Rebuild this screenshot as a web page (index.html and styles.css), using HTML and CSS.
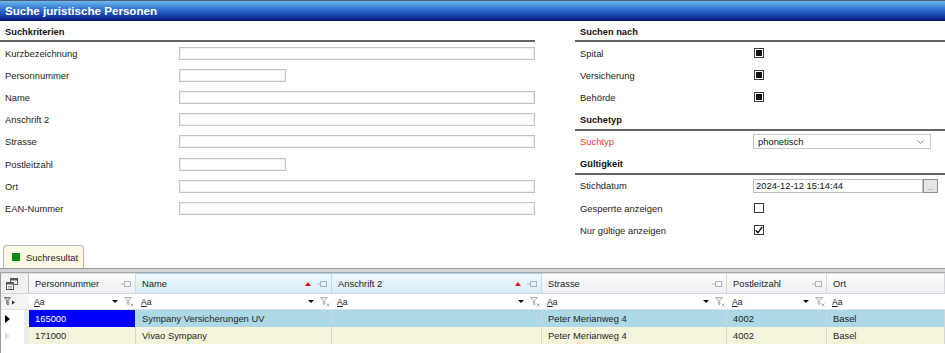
FILE: index.html
```html
<!DOCTYPE html>
<html lang="de">
<head>
<meta charset="utf-8">
<title>Suche juristische Personen</title>
<link rel="stylesheet" href="styles.css">
</head>
<body>
<div class="titlebar">Suche juristische Personen</div>

<div class="form">
  <section class="panel left">
    <div class="sec-head">Suchkriterien</div>
    <div class="row"><span class="lbl">Kurzbezeichnung</span><span class="input wide"></span></div>
    <div class="row"><span class="lbl">Personnummer</span><span class="input short"></span></div>
    <div class="row"><span class="lbl">Name</span><span class="input wide"></span></div>
    <div class="row"><span class="lbl">Anschrift 2</span><span class="input wide"></span></div>
    <div class="row"><span class="lbl">Strasse</span><span class="input wide"></span></div>
    <div class="row"><span class="lbl">Postleitzahl</span><span class="input short"></span></div>
    <div class="row"><span class="lbl">Ort</span><span class="input wide"></span></div>
    <div class="row"><span class="lbl">EAN-Nummer</span><span class="input wide"></span></div>
  </section>

  <section class="panel right">
    <div class="sec-head">Suchen nach</div>
    <div class="row"><span class="lbl">Spital</span><span class="cb on"></span></div>
    <div class="row"><span class="lbl">Versicherung</span><span class="cb on"></span></div>
    <div class="row"><span class="lbl">Behörde</span><span class="cb on"></span></div>
    <div class="sec-head sub">Suchetyp</div>
    <div class="row"><span class="lbl req">Suchtyp</span>
      <span class="select"><span class="sel-text">phonetisch</span>
        <svg class="chev" width="7" height="4" viewBox="0 0 7 4"><path d="M0.5 0.5L3.5 3.5L6.5 0.5" fill="none" stroke="#8a8a8a"/></svg>
      </span>
    </div>
    <div class="sec-head sub">Gültigkeit</div>
    <div class="row"><span class="lbl">Stichdatum</span>
      <span class="date"><span class="dinput">2024-12-12 15:14:44</span><span class="dbtn">...</span></span>
    </div>
    <div class="row"><span class="lbl">Gesperrte anzeigen</span><span class="cb"></span></div>
    <div class="row"><span class="lbl">Nur gültige anzeigen</span>
      <span class="cb"><svg width="8" height="8" viewBox="0 0 8 8"><path d="M0.8 4.2L3 6.6L7.3 0.8" fill="none" stroke="#111" stroke-width="1.4"/></svg></span>
    </div>
  </section>
</div>

<div class="tabs">
  <div class="tab"><span class="tab-icon"></span>Suchresultat</div>
</div>
<div class="band"></div>

<div class="grid">
  <div class="grow ghead">
    <div class="hc sel">
      <svg width="12" height="12" viewBox="0 0 12 12"><rect x="4.5" y="0.5" width="7" height="6" fill="#fff" stroke="#555"/><rect x="4.5" y="0.5" width="7" height="2" fill="#555"/><rect x="0.5" y="4.5" width="7" height="7" fill="#fff" stroke="#555"/><rect x="0.5" y="4.5" width="7" height="2" fill="#555"/><path d="M2 8.5h4M2 10h4" stroke="#999"/></svg>
    </div>
    <div class="hc"><span class="ht">Personnummer</span><svg class="pin" width="10" height="6" viewBox="0 0 10 6"><path d="M0 3h3" stroke="#a9b4bd"/><rect x="3.5" y="0.5" width="6" height="5" fill="none" stroke="#a9b4bd"/></svg></div>
    <div class="hc sorted"><span class="ht">Name</span><svg class="sort" width="6" height="4" viewBox="0 0 6 4"><path d="M0 4L3 0L6 4z" fill="#e01010"/></svg><svg class="pin" width="10" height="6" viewBox="0 0 10 6"><path d="M0 3h3" stroke="#a9b4bd"/><rect x="3.5" y="0.5" width="6" height="5" fill="none" stroke="#a9b4bd"/></svg></div>
    <div class="hc sorted"><span class="ht">Anschrift 2</span><svg class="sort" width="6" height="4" viewBox="0 0 6 4"><path d="M0 4L3 0L6 4z" fill="#e01010"/></svg><svg class="pin" width="10" height="6" viewBox="0 0 10 6"><path d="M0 3h3" stroke="#a9b4bd"/><rect x="3.5" y="0.5" width="6" height="5" fill="none" stroke="#a9b4bd"/></svg></div>
    <div class="hc"><span class="ht">Strasse</span><svg class="pin" width="10" height="6" viewBox="0 0 10 6"><path d="M0 3h3" stroke="#a9b4bd"/><rect x="3.5" y="0.5" width="6" height="5" fill="none" stroke="#a9b4bd"/></svg></div>
    <div class="hc"><span class="ht">Postleitzahl</span><svg class="pin" width="10" height="6" viewBox="0 0 10 6"><path d="M0 3h3" stroke="#a9b4bd"/><rect x="3.5" y="0.5" width="6" height="5" fill="none" stroke="#a9b4bd"/></svg></div>
    <div class="hc"><span class="ht">Ort</span></div>
  </div>

  <div class="grow gfilter">
    <div class="fc sel">
      <svg width="11" height="9" viewBox="0 0 11 9"><path d="M0.5 0.5h6l-2.3 3v4.5l-1.4-1v-3.5z" fill="#c4c4c4" stroke="#6f6f6f"/><path d="M8 3.5l3 2-3 2z" fill="#222"/></svg>
    </div>
    <div class="fc"><span class="aa"><u>A</u>a</span><svg class="dd" width="6" height="3" viewBox="0 0 6 3"><path d="M0 0h6L3 3z" fill="#111"/></svg><svg class="fx" width="10" height="10" viewBox="0 0 10 10"><path d="M0.5 0.5h7l-2.8 3.2v4.3l-1.4-1v-3.3z" fill="#eee" stroke="#b3b3b3"/><path d="M6.5 6.5l3 3M9.5 6.5l-3 3" stroke="#b3b3b3"/></svg></div>
    <div class="fc"><span class="aa"><u>A</u>a</span><svg class="dd" width="6" height="3" viewBox="0 0 6 3"><path d="M0 0h6L3 3z" fill="#111"/></svg><svg class="fx" width="10" height="10" viewBox="0 0 10 10"><path d="M0.5 0.5h7l-2.8 3.2v4.3l-1.4-1v-3.3z" fill="#eee" stroke="#b3b3b3"/><path d="M6.5 6.5l3 3M9.5 6.5l-3 3" stroke="#b3b3b3"/></svg></div>
    <div class="fc"><span class="aa"><u>A</u>a</span><svg class="dd" width="6" height="3" viewBox="0 0 6 3"><path d="M0 0h6L3 3z" fill="#111"/></svg><svg class="fx" width="10" height="10" viewBox="0 0 10 10"><path d="M0.5 0.5h7l-2.8 3.2v4.3l-1.4-1v-3.3z" fill="#eee" stroke="#b3b3b3"/><path d="M6.5 6.5l3 3M9.5 6.5l-3 3" stroke="#b3b3b3"/></svg></div>
    <div class="fc"><span class="aa"><u>A</u>a</span><svg class="dd" width="6" height="3" viewBox="0 0 6 3"><path d="M0 0h6L3 3z" fill="#111"/></svg><svg class="fx" width="10" height="10" viewBox="0 0 10 10"><path d="M0.5 0.5h7l-2.8 3.2v4.3l-1.4-1v-3.3z" fill="#eee" stroke="#b3b3b3"/><path d="M6.5 6.5l3 3M9.5 6.5l-3 3" stroke="#b3b3b3"/></svg></div>
    <div class="fc"><span class="aa"><u>A</u>a</span><svg class="dd" width="6" height="3" viewBox="0 0 6 3"><path d="M0 0h6L3 3z" fill="#111"/></svg><svg class="fx" width="10" height="10" viewBox="0 0 10 10"><path d="M0.5 0.5h7l-2.8 3.2v4.3l-1.4-1v-3.3z" fill="#eee" stroke="#b3b3b3"/><path d="M6.5 6.5l3 3M9.5 6.5l-3 3" stroke="#b3b3b3"/></svg></div>
    <div class="fc"><span class="aa"><u>A</u>a</span></div>
  </div>

  <div class="grow gdata r1">
    <div class="dc sel"><svg width="5" height="8" viewBox="0 0 5 8"><path d="M0 0L5 4L0 8z" fill="#000"/></svg></div>
    <div class="dc active">165000</div>
    <div class="dc">Sympany Versicherungen UV</div>
    <div class="dc"></div>
    <div class="dc">Peter Merianweg 4</div>
    <div class="dc">4002</div>
    <div class="dc">Basel</div>
  </div>
  <div class="grow gdata r2">
    <div class="dc sel"><svg width="5" height="8" viewBox="0 0 5 8"><path d="M0 0L5 4L0 8z" fill="#e2e2e2"/></svg></div>
    <div class="dc">171000</div>
    <div class="dc">Vivao Sympany</div>
    <div class="dc"></div>
    <div class="dc">Peter Merianweg 4</div>
    <div class="dc">4002</div>
    <div class="dc">Basel</div>
  </div>
</div>
</body>
</html>
```

FILE: styles.css
```css
* { box-sizing: border-box; }

html, body {
  margin: 0;
  padding: 0;
  background: #fff;
}

body {
  width: 945px;
  height: 353px;
  overflow: hidden;
  font-family: "Liberation Sans", Arial, sans-serif;
  font-size: 9.4px;
  color: #1c1c1c;
}

/* ---------- title ---------- */
.titlebar {
  height: 21px;
  display: flex;
  align-items: center;
  padding-left: 5px;
  color: #fff;
  font-weight: bold;
  font-size: 11.6px;
  background: linear-gradient(#6fb9ee 0%, #3a7fd6 35%, #1a4bb0 70%, #0c1f86 100%);
  border-top: 1px solid #4f5d72;
  border-bottom: 1px solid #0a1470;
}

/* ---------- form ---------- */
.form {
  display: flex;
  gap: 40px;
  height: 224px;
}

.panel.left { width: 535px; flex: none; }
.panel.right { flex: 1; }

.sec-head {
  height: 21px;
  padding: 3px 0 0 5px;
  display: flex;
  align-items: center;
  font-weight: bold;
  font-size: 9.3px;
  color: #111;
  border-bottom: 2px solid #636363;
}

.sec-head.sub {
  height: 22px;
  padding-top: 2px;
}

.row {
  height: 22.2px;
  display: flex;
  align-items: center;
  padding-left: 5px;
}

.left .lbl { width: 174px; flex: none; }
.right .lbl { width: 173px; flex: none; }
.lbl.req { color: #f23a3a; }

.input {
  display: block;
  height: 13px;
  background: #fff;
  border: 1px solid #c4c4c4;
  box-shadow: inset 0 0 0 1px #f1f1f1;
}
.input.wide { width: 356px; }
.input.short { width: 107px; }

.cb {
  display: flex;
  align-items: center;
  justify-content: center;
  width: 10px;
  height: 10px;
  margin-left: 1px;
  border: 1px solid #3c3c3c;
  background: #fff;
}
.cb.on::before {
  content: "";
  display: block;
  width: 6px;
  height: 6px;
  background: #111;
}

.select {
  display: flex;
  align-items: center;
  width: 178px;
  height: 15px;
  padding: 0 6px 0 4px;
  border: 1px solid #c8c8c8;
  background: #fff;
  color: #111;
}
.sel-text { flex: 1; }

.date {
  display: flex;
  height: 14px;
}
.dinput {
  display: flex;
  align-items: center;
  width: 170px;
  padding-left: 2px;
  border: 1px solid #bdbdbd;
  background: #fff;
  color: #111;
}
.dbtn {
  width: 15px;
  display: flex;
  align-items: flex-end;
  justify-content: center;
  font-size: 7px;
  line-height: 9px;
  color: #6a6a6a;
  background: #e4e4e4;
  border: 1px solid #8f8f8f;
}

/* ---------- tabs ---------- */
.tabs {
  height: 23px;
  display: flex;
  align-items: flex-end;
  padding-left: 3px;
}
.tab {
  height: 23px;
  width: 81px;
  display: flex;
  align-items: center;
  gap: 6px;
  padding-left: 8px;
  border: 1px solid #b8b8b8;
  border-bottom: none;
  border-radius: 4px 4px 0 0;
  background: #fcf9e4;
  color: #1c1c1c;
}
.tab-icon {
  width: 8px;
  height: 8px;
  background: #0a8c12;
}

.band {
  height: 5px;
  border-top: 1px solid #9c9c9c;
  border-bottom: 1px solid #a6a6a6;
  background: #d3d3d3;
}

/* ---------- grid ---------- */
.grid {
  border-left: 1px solid #9a9a9a;
  height: 80px;
}

.grow {
  display: grid;
  grid-template-columns: 28px 107px 196px 210px 185px 100px 1fr;
}

.ghead {
  height: 21px;
  border-bottom: 1px solid #cfd6dc;
}
.hc {
  display: flex;
  align-items: center;
  padding: 0 4px 0 6px;
  background: linear-gradient(#fdfdfd, #eeeff1);
  border-right: 1px solid #d4d8dc;
  border-top: 1px solid #dedede;
  color: #222;
}
.hc.sel {
  justify-content: flex-start;
  padding-left: 5px;
  background: #f2f2f2;
  border-right: 1px solid #bcbcbc;
}
.hc.sorted {
  background: linear-gradient(#f0f8fd, #d8edfa);
  border-top: 1px solid #a9d4f0;
  border-right: 1px solid #bfdcef;
}
.ht { flex: 1; }
.sort { margin-right: 6px; }
.pin { flex: none; }

.gfilter {
  height: 16px;
  border-bottom: 1px solid #e2e2e2;
}
.fc {
  display: flex;
  align-items: center;
  padding: 0 2px 0 5px;
  background: #fff;
}
.fc.sel {
  padding-left: 3px;
  background: #f4f4f4;
}
.aa {
  flex: 1;
  font-size: 8.6px;
  color: #222;
}
.aa u { text-decoration-thickness: 1px; text-underline-offset: 1px; }
.dd { margin-right: 6px; }

.gdata { height: 17px; }
.dc {
  display: flex;
  align-items: center;
  padding-left: 6px;
  border-right: 1px solid #cfd5d8;
  color: #1e1e1e;
  white-space: nowrap;
}
.r1 { background: #add8e6; }
.r2 { background: #f5f5dc; }
.dc.sel {
  padding-left: 4px;
  background: linear-gradient(to right, #fff 23px, #ebebeb 23px);
  border-right: none;
}
.dc.active {
  background: #0000ff;
  color: #fff;
}
```
